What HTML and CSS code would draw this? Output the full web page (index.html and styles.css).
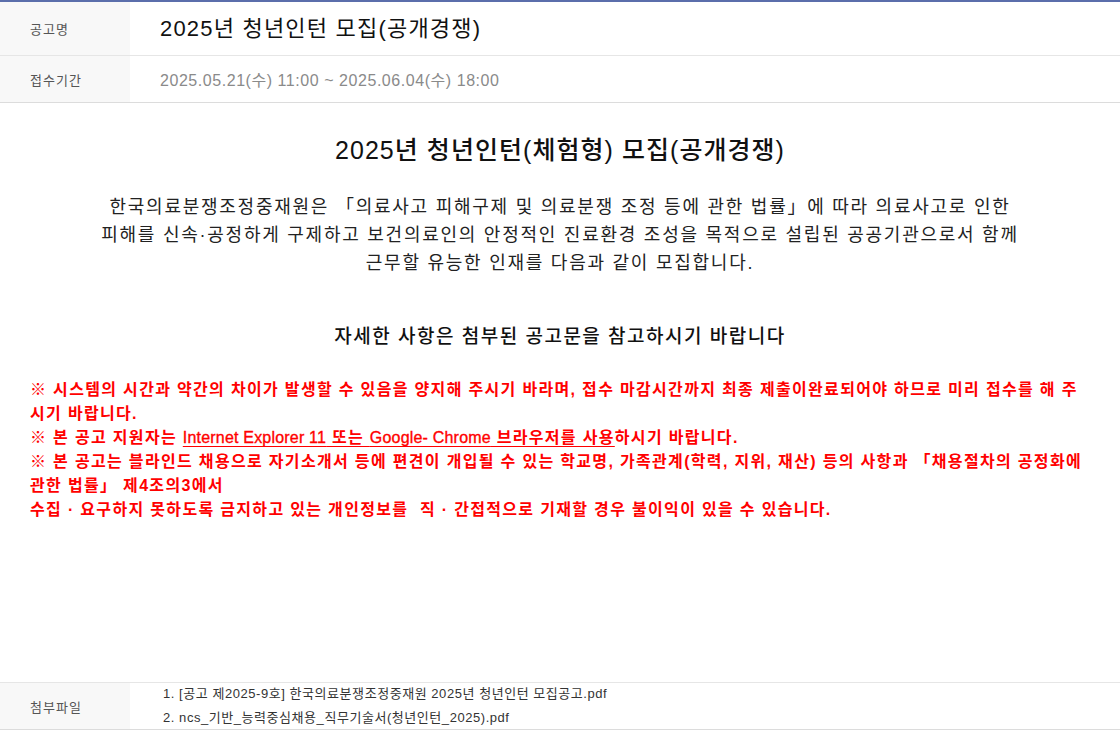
FILE: index.html
```html
<!DOCTYPE html>
<html lang="ko">
<head>
<meta charset="utf-8">
<title>2025년 청년인턴 모집(공개경쟁)</title>
<link rel="stylesheet" href="styles.css">
</head>
<body>
<div class="board">
  <div class="row row-title">
    <div class="label">공고명</div>
    <div class="value title">2025년 청년인턴 모집(공개경쟁)</div>
  </div>
  <div class="row row-date">
    <div class="label">접수기간</div>
    <div class="value date">2025.05.21(수) 11:00 ~ 2025.06.04(수) 18:00</div>
  </div>
  <div class="content">
    <h2 class="heading">2025년 청년인턴(체험형) 모집(공개경쟁)</h2>
    <p class="intro">한국의료분쟁조정중재원은 「의료사고 피해구제 및 의료분쟁 조정 등에 관한 법률」에 따라 의료사고로 인한<br>피해를 신속·공정하게 구제하고 보건의료인의 안정적인 진료환경 조성을 목적으로 설립된 공공기관으로서 함께<br>근무할 유능한 인재를 다음과 같이 모집합니다.</p>
    <p class="sub">자세한 사항은 첨부된 공고문을 참고하시기 바랍니다</p>
    <div class="notice">
      <p>※ 시스템의 시간과 약간의 차이가 발생할 수 있음을 양지해 주시기 바라며, 접수 마감시간까지 최종 제출이완료되어야 하므로 미리 접수를 해 주<br>시기 바랍니다.</p>
      <p>※ 본 공고 지원자는 <u><span class="en">Internet Explorer 11</span> 또는 <span class="en">Google- Chrome</span> 브라우저를 사용</u>하시기 바랍니다.</p>
      <p>※ 본 공고는 블라인드 채용으로 자기소개서 등에 편견이 개입될 수 있는 학교명, 가족관계(학력, 지위, 재산) 등의 사항과 「채용절차의 공정화에<br>관한 법률」 제4조의3에서<br>수집 · 요구하지 못하도록 금지하고 있는 개인정보를&nbsp; 직 · 간접적으로 기재할 경우 불이익이 있을 수 있습니다.</p>
    </div>
  </div>
  <div class="row row-file">
    <div class="label">첨부파일</div>
    <ul class="value files">
      <li>1. [공고 제2025-9호] 한국의료분쟁조정중재원 2025년 청년인턴 모집공고.pdf</li>
      <li>2. ncs_기반_능력중심채용_직무기술서(청년인턴_2025).pdf</li>
    </ul>
  </div>
</div>
</body>
</html>
```
FILE: styles.css
```css
html, body {
  margin: 0;
  padding: 0;
  background: #fff;
}
body {
  font-family: "Liberation Sans", "Noto Sans CJK KR", sans-serif;
  color: #222;
}
.board {
  border-top: 2px solid #5b6eab;
  width: 1120px;
}
.row {
  display: flex;
  align-items: stretch;
}
.label {
  width: 130px;
  flex: none;
  box-sizing: border-box;
  padding-left: 30px;
  background: #f8f8f8;
  font-size: 13px;
  color: #555;
  letter-spacing: 1px;
  display: flex;
  align-items: center;
}
.value {
  flex: 1;
  padding-left: 30px;
  display: flex;
  align-items: center;
}
.row-title {
  height: 53px;
  border-bottom: 1px solid #e6e6e6;
}
.title {
  font-size: 22px;
  color: #111;
  letter-spacing: 1.2px;
  padding-bottom: 5px;
}
.row-date {
  height: 46px;
  border-bottom: 1px solid #dcdcdc;
}
.date {
  font-size: 16px;
  color: #8a8a8a;
  letter-spacing: 0.55px;
}
.content {
  height: 579px;
  box-sizing: border-box;
  padding: 30px 30px 0;
}
.heading {
  margin: 0;
  text-align: center;
  font-size: 25px;
  font-weight: 500;
  line-height: 34px;
  color: #111;
  letter-spacing: 1.05px;
}
.intro {
  margin: 26px 0 0;
  text-align: center;
  font-size: 18px;
  line-height: 28px;
  color: #222;
  letter-spacing: 1.75px;
}
.sub {
  margin: 46px 0 0;
  text-align: center;
  font-size: 19px;
  line-height: 28px;
  color: #111;
  font-weight: 500;
  letter-spacing: 1.5px;
}
.notice {
  margin-top: 27px;
  color: #ff0000;
  font-size: 16px;
  font-weight: 700;
  line-height: 24px;
  letter-spacing: 1.33px;
}
.notice p {
  margin: 0;
}
.notice u {
  text-decoration-thickness: 1px;
  text-underline-offset: 3px;
}
.notice .en {
  letter-spacing: 0.2px;
  font-weight: 400;
  -webkit-text-stroke: 0.35px #ff0000;
}
.row-file {
  height: 46px;
  border-top: 1px solid #e6e6e6;
  border-bottom: 1px solid #dcdcdc;
}
.files {
  margin: 0;
  padding: 0 0 0 33px;
  list-style: none;
  flex-direction: column;
  align-items: flex-start;
  justify-content: center;
  font-size: 13px;
  line-height: 24px;
  color: #333;
  letter-spacing: 0.55px;
}
```
